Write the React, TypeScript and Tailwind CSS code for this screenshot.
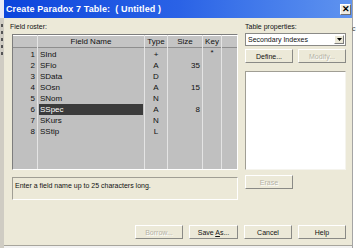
import React from 'react';

const rows = [
  { n: 1, name: 'SInd', type: '+', size: '', key: '*' },
  { n: 2, name: 'SFio', type: 'A', size: '35', key: '' },
  { n: 3, name: 'SData', type: 'D', size: '', key: '' },
  { n: 4, name: 'SOsn', type: 'A', size: '15', key: '' },
  { n: 5, name: 'SNom', type: 'N', size: '', key: '' },
  { n: 6, name: 'SSpec', type: 'A', size: '8', key: '' },
  { n: 7, name: 'SKurs', type: 'N', size: '', key: '' },
  { n: 8, name: 'SStip', type: 'L', size: '', key: '' },
];

function Btn({ label, disabled, w = 'w-[48px]' }: { label: React.ReactNode; disabled?: boolean; w?: string }) {
  return (
    <div
      className={`${w} h-[14px] flex items-center justify-center bg-[#ece9d8] border border-t-white border-l-white border-b-[#8a8a86] border-r-[#8a8a86] text-[7px] leading-none ${
        disabled ? 'text-[#b5b2a6] [text-shadow:1px_1px_0_#fff]' : 'text-[#111]'
      }`}
    >
      {label}
    </div>
  );
}

function Column({
  w,
  title,
  cells,
  align,
  last,
}: {
  w: string;
  title: string;
  cells: React.ReactNode[];
  align: string;
  last?: boolean;
}) {
  return (
    <div className={`${w} flex flex-col h-full ${last ? '' : 'border-r border-[#e4e4e4]'}`}>
      <div className="h-[13px] flex items-center justify-center bg-[#c4c4c4] border-t border-white border-b border-b-[#8e8e8e] text-[8px] leading-none text-[#111]">
        {title}
      </div>
      <div className="pt-[1px] flex flex-col">
        {cells.map((c, i) => (
          <div key={i} className={`h-[11px] flex items-center text-[8px] leading-none text-[#111] ${align}`}>
            {c}
          </div>
        ))}
      </div>
    </div>
  );
}

export default function App() {
  return (
    <div className="w-[358px] h-[248px] flex bg-[#f2f2f2] overflow-hidden antialiased font-['Liberation_Sans',Arial,sans-serif]">
      <div className="w-[4px] h-full flex flex-col bg-[#cfccc3]">
        <div className="h-[18px] bg-[#e8e8f4]" />
        <div className="flex flex-col gap-[4px] pt-[6px] pl-[1px]">
          <div className="w-[2px] h-[3px] bg-[#555]" />
          <div className="w-[2px] h-[3px] bg-[#555]" />
          <div className="w-[2px] h-[3px] bg-[#555]" />
          <div className="w-[2px] h-[3px] bg-[#555]" />
          <div className="w-[2px] h-[3px] bg-[#555]" />
        </div>
      </div>

      <div className="w-[348px] h-[246px] flex flex-col border-b border-[#a7a59c]">
        <div className="h-[18px] flex items-center justify-between pl-[2px] pr-[1px] bg-gradient-to-r from-[#0c45dc] via-[#2a62e6] to-[#5f93ef]">
          <span className="text-white font-bold text-[9px] leading-none tracking-[0.1px]">
            Create Paradox 7 Table:&nbsp; ( Untitled )
          </span>
          <div className="w-[11px] h-[11px] flex items-center justify-center bg-[#eceae2] border border-t-white border-l-white border-b-[#6f6f6f] border-r-[#6f6f6f] text-[9px] font-bold leading-none text-black">
            ✕
          </div>
        </div>

        <div className="flex-1 flex flex-col bg-[#ece9d8] pl-[8px] pr-[6px]">
          <div className="flex">
            <div className="w-[226px] flex flex-col">
              <div className="h-[16px] pt-[4px] -ml-[2px] text-[7px] leading-[10px] text-[#111]">Field roster:</div>
              <div className="h-[136px] flex bg-[#c0c0c0] border border-t-[#7d7d7d] border-l-[#7d7d7d] border-b-white border-r-white">
                <Column
                  w="w-[25px]"
                  title=""
                  cells={rows.map((r) => r.n)}
                  align="justify-end pr-[2px]"
                />
                <Column
                  w="w-[107px]"
                  title="Field Name"
                  cells={rows.map((r) =>
                    r.n === 6 ? (
                      <div className="w-full h-full ml-[1px] mr-[1px] pl-[1px] flex items-center bg-[#3b3b3b] text-white">
                        {r.name}
                      </div>
                    ) : (
                      <span className="pl-[2px]">{r.name}</span>
                    )
                  )}
                  align=""
                />
                <Column w="w-[23px]" title="Type" cells={rows.map((r) => r.type)} align="justify-center" />
                <Column w="w-[35px]" title="Size" cells={rows.map((r) => r.size)} align="justify-end pr-[2px]" />
                <Column
                  w="w-[19px]"
                  title="Key"
                  cells={rows.map((r) => (r.key ? <span className="-mt-[3px]">{r.key}</span> : ''))}
                  align="justify-center"
                />
                <div className="flex-1 flex flex-col">
                  <div className="h-[13px] bg-[#c4c4c4] border-t border-white border-b border-b-[#8e8e8e]" />
                </div>
              </div>
              <div className="mt-[7px] h-[23px] pl-[2px] pt-[3px] bg-[#ece9d8] border border-t-[#a09e94] border-l-[#a09e94] border-b-white border-r-white text-[7px] leading-[9px] text-[#111]">
                Enter a field name up to 25 characters long.
              </div>
            </div>

            <div className="ml-[7px] w-[101px] flex flex-col">
              <div className="h-[15px] pt-[4px] text-[7px] leading-[10px] text-[#111]">Table properties:</div>
              <div className="h-[13px] flex items-center justify-between bg-white border border-[#8a8a86] pl-[2px] pr-[1px]">
                <span className="text-[7px] leading-none text-[#111]">Secondary Indexes</span>
                <div className="w-[10px] h-[9px] flex items-center justify-center bg-[#ece9d8] border border-t-white border-l-white border-b-[#7d7d7d] border-r-[#7d7d7d]">
                  <svg width="5" height="3" viewBox="0 0 5 3">
                    <path d="M0 0h5L2.5 3z" fill="#000" />
                  </svg>
                </div>
              </div>
              <div className="mt-[3px] flex justify-between">
                <Btn label="Define..." />
                <Btn label="Modify..." disabled />
              </div>
              <div className="mt-[8px] h-[99px] bg-white border border-t-[#a09e94] border-l-[#a09e94] border-b-[#f5f4ee] border-r-[#f5f4ee]" />
              <div className="mt-[5px]">
                <Btn label="Erase" disabled />
              </div>
            </div>
          </div>

          <div className="mt-[25px] flex justify-end gap-[6px]">
            <Btn label="Borrow..." disabled />
            <Btn label={<span>Save <u>A</u>s...</span>} w="w-[49px]" />
            <Btn label="Cancel" />
            <Btn label="Help" />
          </div>
        </div>
      </div>

      <div className="w-[6px] h-full bg-white border-l border-[#a4a4a4] flex flex-col">
        <div className="h-[25px]" />
        <span className="text-[7px] leading-none text-[#444] -ml-[1px]">c</span>
      </div>
    </div>
  );
}
